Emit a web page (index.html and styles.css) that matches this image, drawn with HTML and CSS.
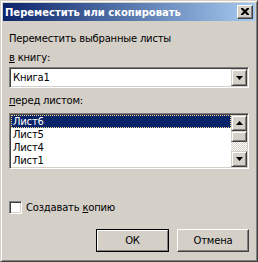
FILE: index.html
```html
<!DOCTYPE html>
<html lang="ru">
<head>
  <meta charset="UTF-8">
  <title>Переместить или скопировать</title>
  <link rel="stylesheet" href="styles.css">
</head>
<body>
  <div class="window">
    <div class="titlebar">
      <span class="title">Переместить или скопировать</span>
      <span class="close">
        <svg width="8" height="7" viewBox="0 0 8 7"><path d="M0 0h2l2 2 2-2h2v1l-2.5 2.5L8 6v1H6L4 5 2 7H0V6l2.5-2.5L0 1z" fill="#000"/></svg>
      </span>
    </div>
    <div class="client">
      <div class="label first">Переместить выбранные листы</div>
      <div class="label"><u>в</u> книгу:</div>
      <div class="combo">
        <span class="combo-text">Книга1</span>
        <span class="arrow-btn">
          <svg width="7" height="4" viewBox="0 0 7 4"><path d="M0 0h7L3.5 4z" fill="#000"/></svg>
        </span>
      </div>
      <div class="label"><u>п</u>еред листом:</div>
      <div class="listbox">
        <ul class="items">
          <li class="selected">Лист6</li>
          <li>Лист5</li>
          <li>Лист4</li>
          <li>Лист1</li>
        </ul>
        <div class="scrollbar">
          <span class="arrow-btn">
            <svg width="7" height="4" viewBox="0 0 7 4"><path d="M3.5 0L7 4H0z" fill="#000"/></svg>
          </span>
          <span class="thumb"></span>
          <span class="track"></span>
          <span class="arrow-btn">
            <svg width="7" height="4" viewBox="0 0 7 4"><path d="M0 0h7L3.5 4z" fill="#000"/></svg>
          </span>
        </div>
      </div>
      <div class="check">
        <span class="box"></span>
        <span>Создавать <u>к</u>опию</span>
      </div>
      <div class="buttons">
        <span class="btn default"><span>ОК</span></span>
        <span class="btn"><span>Отмена</span></span>
      </div>
    </div>
  </div>
</body>
</html>
```

FILE: styles.css
```css
body {
  margin: 0;
  font-family: 'DejaVu Sans', sans-serif;
  font-size: 10px;
  letter-spacing: -0.2px;
  color: #000;
  background-color: #d4d0c8;
}
.window {
  width: 258px;
  height: 262px;
  box-sizing: border-box;
  border: 1px solid;
  border-color: #d4d0c8 #404040 #404040 #d4d0c8;
  box-shadow: inset 1px 1px #fff, inset -1px -1px #808080;
  padding: 2px;
  background-color: #d4d0c8;
  display: flex;
  flex-direction: column;
}
.titlebar {
  height: 18px;
  background: linear-gradient(to right, #0a246a, #a6caf0);
  display: flex;
  align-items: center;
  justify-content: space-between;
  padding: 0 2px;
}
.title {
  color: #fff;
  font-weight: bold;
  font-size: 10px;
  letter-spacing: 0;
}
.close {
  width: 16px;
  height: 14px;
  box-sizing: border-box;
  background-color: #d4d0c8;
  border: 1px solid;
  border-color: #fff #404040 #404040 #fff;
  box-shadow: inset -1px -1px #808080;
  display: flex;
  align-items: center;
  justify-content: center;
  padding: 0 1px 1px 0;
}
.close svg {
  display: block;
}
.client {
  flex: 1;
  padding: 0 6px;
  display: flex;
  flex-direction: column;
}
.label {
  height: 13px;
  line-height: 13px;
  margin-top: 6px;
}
.label.first {
  margin-top: 11px;
}
.combo {
  margin-top: 3px;
  height: 21px;
  box-sizing: border-box;
  border: 1px solid;
  border-color: #808080 #fff #fff #808080;
  box-shadow: inset 1px 1px #404040, inset -1px -1px #d4d0c8;
  background-color: #fff;
  display: flex;
  align-items: center;
  padding: 1px;
}
.combo-text {
  flex: 1;
  padding-left: 2px;
}
.arrow-btn {
  width: 16px;
  height: 17px;
  box-sizing: border-box;
  background-color: #d4d0c8;
  border: 1px solid;
  border-color: #d4d0c8 #404040 #404040 #d4d0c8;
  box-shadow: inset 1px 1px #fff, inset -1px -1px #808080;
  display: flex;
  align-items: center;
  justify-content: center;
}
.arrow-btn svg {
  display: block;
}
.listbox {
  margin-top: 6px;
  height: 56px;
  box-sizing: border-box;
  border: 1px solid;
  border-color: #808080 #fff #fff #808080;
  box-shadow: inset 1px 1px #404040, inset -1px -1px #d4d0c8;
  background-color: #fff;
  padding: 1px;
  display: flex;
}
.items {
  list-style: none;
  margin: 0;
  padding: 0;
  flex: 1;
}
.items li {
  height: 13px;
  line-height: 13px;
  padding-left: 2px;
}
.items li.selected {
  background-color: #0a246a;
  color: #fff;
  outline: 1px dotted #f5db95;
  outline-offset: -1px;
}
.scrollbar {
  width: 16px;
  display: flex;
  flex-direction: column;
}
.scrollbar .arrow-btn {
  height: 16px;
}
.thumb {
  height: 11px;
  box-sizing: border-box;
  border: 1px solid;
  border-color: #d4d0c8 #404040 #404040 #d4d0c8;
  box-shadow: inset 1px 1px #fff, inset -1px -1px #808080;
  background-color: #d4d0c8;
}
.track {
  flex: 1;
  background: repeating-conic-gradient(#fff 0 25%, #d4d0c8 0 50%) 0 0 / 2px 2px;
}
.check {
  margin-top: 32px;
  display: flex;
  align-items: center;
  height: 13px;
  gap: 4px;
}
.box {
  width: 13px;
  height: 13px;
  box-sizing: border-box;
  border: 1px solid;
  border-color: #808080 #fff #fff #808080;
  box-shadow: inset 1px 1px #404040, inset -1px -1px #d4d0c8;
  background-color: #fff;
}
.buttons {
  margin-top: 15px;
  display: flex;
  gap: 8px;
  padding-left: 87px;
}
.btn {
  width: 73px;
  height: 23px;
  box-sizing: border-box;
  border: 1px solid;
  border-color: #fff #404040 #404040 #fff;
  box-shadow: inset -1px -1px #808080;
  display: flex;
  align-items: center;
  justify-content: center;
}
.btn.default {
  border-color: #000;
  box-shadow: none;
}
.btn.default span {
  display: flex;
  align-items: center;
  justify-content: center;
  width: 71px;
  height: 21px;
  box-sizing: border-box;
  border: 1px solid;
  border-color: #fff #808080 #808080 #fff;
}
```
